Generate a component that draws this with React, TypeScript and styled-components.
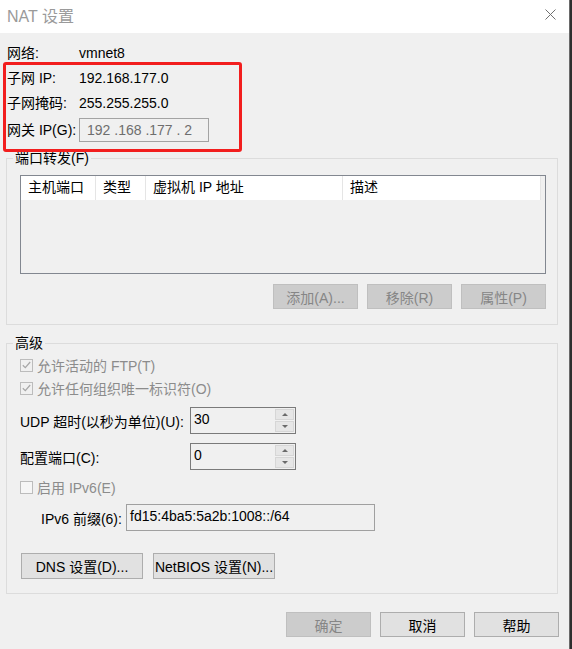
import React from 'react'
import styled, { createGlobalStyle } from 'styled-components'

const GlobalStyle = createGlobalStyle`
  html, body {
    margin: 0;
    padding: 0;
    background: #2e2e2e;
  }
  body {
    font-family: "Liberation Sans", "Noto Sans CJK SC", sans-serif;
    font-size: 14px;
    color: #000;
  }
  * {
    box-sizing: border-box;
  }
`

const Screen = styled.div`
  display: flex;
  width: 572px;
  height: 649px;
  overflow: hidden;
`

const Window = styled.div`
  width: 570px;
  height: 649px;
  display: flex;
  flex-direction: column;
  background: #f0f0f0;
  border-right: 1px solid #6a6a6a;
`

const TitleBar = styled.div`
  height: 33px;
  flex-shrink: 0;
  display: flex;
  align-items: center;
  justify-content: space-between;
  padding: 0 13px 4px 7px;
  background: #fff;
`

const Title = styled.div`
  font-size: 16px;
  color: #9a9a9a;
`

const Body = styled.div`
  position: relative;
  flex: 1;
  padding: 10px 10px 0 6px;
`

const InfoGrid = styled.div`
  display: grid;
  grid-template-columns: 72px max-content;
  grid-template-rows: 20px 20px 20px 24px;
  row-gap: 5px;
  align-items: center;
  padding-left: 1px;
  line-height: 20px;
`

const IpBox = styled.div`
  width: 130px;
  height: 24px;
  display: flex;
  align-items: center;
  padding-left: 7px;
  border: 1px solid #a3a3a3;
  background: #f0f0f0;
  color: #6e6e6e;
  white-space: pre;
`

const Highlight = styled.div`
  position: absolute;
  left: 3px;
  top: 29px;
  width: 239px;
  height: 90px;
  border: 3px solid #f21e1e;
  border-radius: 3px;
  pointer-events: none;
`

const Group = styled.fieldset<{ $top: number }>`
  margin: ${p => p.$top}px 1px 0 0;
  padding: 0;
  border: 1px solid #dcdcdc;
  min-width: 0;
`

const GroupTitle = styled.legend`
  margin-left: 6px;
  padding: 0 2px;
  line-height: 16px;
  font-size: 14px;
`

const GroupInner = styled.div<{ $pad: string }>`
  display: flex;
  flex-direction: column;
  padding: ${p => p.$pad};
`

const ListView = styled.div`
  height: 99px;
  border: 1px solid #828790;
  background: #f0f0f0;
`

const ListHeader = styled.div`
  display: flex;
  height: 24px;
  width: 520px;
  background: #fff;
`

const HeaderCell = styled.div<{ $w: number }>`
  width: ${p => p.$w}px;
  padding-left: 7px;
  line-height: 23px;
  border-right: 1px solid #e5e5e5;
  white-space: nowrap;
`

const ButtonRow = styled.div<{ $top: number; $end?: boolean; $gap: number; $indent?: number }>`
  display: flex;
  justify-content: ${p => (p.$end ? 'flex-end' : 'flex-start')};
  gap: ${p => p.$gap}px;
  margin-top: ${p => p.$top}px;
  padding-left: ${p => p.$indent || 0}px;
`

const Button = styled.button<{ $w: number; $h: number }>`
  width: ${p => p.$w}px;
  height: ${p => p.$h}px;
  padding: 0;
  font-family: inherit;
  font-size: 14px;
  color: #000;
  background: #e1e1e1;
  border: 1px solid #adadad;
  border-radius: 0;

  &:disabled {
    color: #868686;
    background: #cccccc;
    border-color: #bfbfbf;
  }
`

const CheckRow = styled.label<{ $top: number }>`
  display: flex;
  align-items: center;
  gap: 4px;
  height: 20px;
  margin-top: ${p => p.$top}px;
  color: #8c8c8c;
`

const CheckBox = styled.span<{ $checked: boolean }>`
  width: 13px;
  height: 13px;
  display: flex;
  align-items: center;
  justify-content: center;
  border: 1px solid #bcbcbc;
  background: ${p => (p.$checked ? '#f0f0f0' : '#f6f6f6')};
`

const FieldRow = styled.div<{ $top: number; $indent?: number; $label: number }>`
  display: grid;
  grid-template-columns: ${p => p.$label}px max-content;
  align-items: center;
  margin-top: ${p => p.$top}px;
  padding-left: ${p => p.$indent || 0}px;
  white-space: nowrap;
`

const SpinBox = styled.div`
  width: 106px;
  height: 27px;
  display: flex;
  justify-content: space-between;
  border: 1px solid #7a7a7a;
  background: #f0f0f0;
`

const SpinValue = styled.div`
  padding: 3px 0 0 3px;
  line-height: 16px;
`

const SpinButtons = styled.div`
  display: flex;
  flex-direction: column;
  gap: 1px;
  margin: 1px 1px 1px 0;
`

const SpinButton = styled.div<{ $up: boolean }>`
  width: 19px;
  flex: 1;
  display: flex;
  align-items: center;
  justify-content: center;
  background: #e6e6e6;
  border: 1px solid #d6d6d6;

  &::after {
    content: '';
    border-left: 3px solid transparent;
    border-right: 3px solid transparent;
    ${p =>
      p.$up ? 'border-bottom: 3px solid #6a6a6a;' : 'border-top: 3px solid #6a6a6a;'}
  }
`

const PrefixBox = styled.div`
  width: 249px;
  height: 27px;
  padding: 3px 0 0 3px;
  line-height: 16px;
  border: 1px solid #a0a0a0;
  background: #f0f0f0;
`

const columns = [
  { label: '主机端口', w: 75 },
  { label: '类型', w: 50 },
  { label: '虚拟机 IP 地址', w: 197 },
  { label: '描述', w: 198 },
]

const Check = ({ checked, label, top }: { checked: boolean; label: string; top: number }) => (
  <CheckRow $top={top}>
    <CheckBox $checked={checked}>
      {checked && (
        <svg width="9" height="8" viewBox="0 0 9 8">
          <path d="M0.8 4.2 L3.3 6.6 L8.2 1" fill="none" stroke="#a6a6a6" strokeWidth="1.2" />
        </svg>
      )}
    </CheckBox>
    {label}
  </CheckRow>
)

const Spin = ({ value }: { value: string }) => (
  <SpinBox>
    <SpinValue>{value}</SpinValue>
    <SpinButtons>
      <SpinButton $up />
      <SpinButton $up={false} />
    </SpinButtons>
  </SpinBox>
)

export default function App() {
  return (
    <>
      <GlobalStyle />
      <Screen>
        <Window>
          <TitleBar>
            <Title>NAT 设置</Title>
            <svg width="11" height="11" viewBox="0 0 11 11">
              <path d="M0.5 0.5 L10.5 10.5 M10.5 0.5 L0.5 10.5" stroke="#707070" strokeWidth="1" />
            </svg>
          </TitleBar>
          <Body>
            <InfoGrid>
              <span>网络:</span>
              <span>vmnet8</span>
              <span>子网 IP:</span>
              <span>192.168.177.0</span>
              <span>子网掩码:</span>
              <span>255.255.255.0</span>
              <span>网关 IP(G):</span>
              <IpBox>192 .168 .177 . 2</IpBox>
            </InfoGrid>

            <Group $top={8}>
              <GroupTitle>端口转发(F)</GroupTitle>
              <GroupInner $pad="9px 11px 15px 13px">
                <ListView>
                  <ListHeader>
                    {columns.map(c => (
                      <HeaderCell key={c.label} $w={c.w}>
                        {c.label}
                      </HeaderCell>
                    ))}
                  </ListHeader>
                </ListView>
                <ButtonRow $top={10} $end $gap={9}>
                  <Button $w={85} $h={25} disabled>
                    添加(A)...
                  </Button>
                  <Button $w={85} $h={25} disabled>
                    移除(R)
                  </Button>
                  <Button $w={85} $h={25} disabled>
                    属性(P)
                  </Button>
                </ButtonRow>
              </GroupInner>
            </Group>

            <Group $top={10}>
              <GroupTitle>高级</GroupTitle>
              <GroupInner $pad="4px 11px 14px 13px">
                <Check checked label="允许活动的 FTP(T)" top={0} />
                <Check checked label="允许任何组织唯一标识符(O)" top={3} />
                <FieldRow $top={9} $label={170}>
                  <span>UDP 超时(以秒为单位)(U):</span>
                  <Spin value="30" />
                </FieldRow>
                <FieldRow $top={9} $label={170}>
                  <span>配置端口(C):</span>
                  <Spin value="0" />
                </FieldRow>
                <Check checked={false} label="启用 IPv6(E)" top={7} />
                <FieldRow $top={7} $indent={21} $label={85}>
                  <span>IPv6 前缀(6):</span>
                  <PrefixBox>fd15:4ba5:5a2b:1008::/64</PrefixBox>
                </FieldRow>
                <ButtonRow $top={22} $gap={10} $indent={1}>
                  <Button $w={122} $h={26}>DNS 设置(D)...</Button>
                  <Button $w={122} $h={26}>NetBIOS 设置(N)...</Button>
                </ButtonRow>
              </GroupInner>
            </Group>

            <ButtonRow $top={18} $end $gap={9}>
              <Button $w={85} $h={25} disabled>
                确定
              </Button>
              <Button $w={85} $h={25}>
                取消
              </Button>
              <Button $w={85} $h={25}>
                帮助
              </Button>
            </ButtonRow>

            <Highlight />
          </Body>
        </Window>
      </Screen>
    </>
  )
}
